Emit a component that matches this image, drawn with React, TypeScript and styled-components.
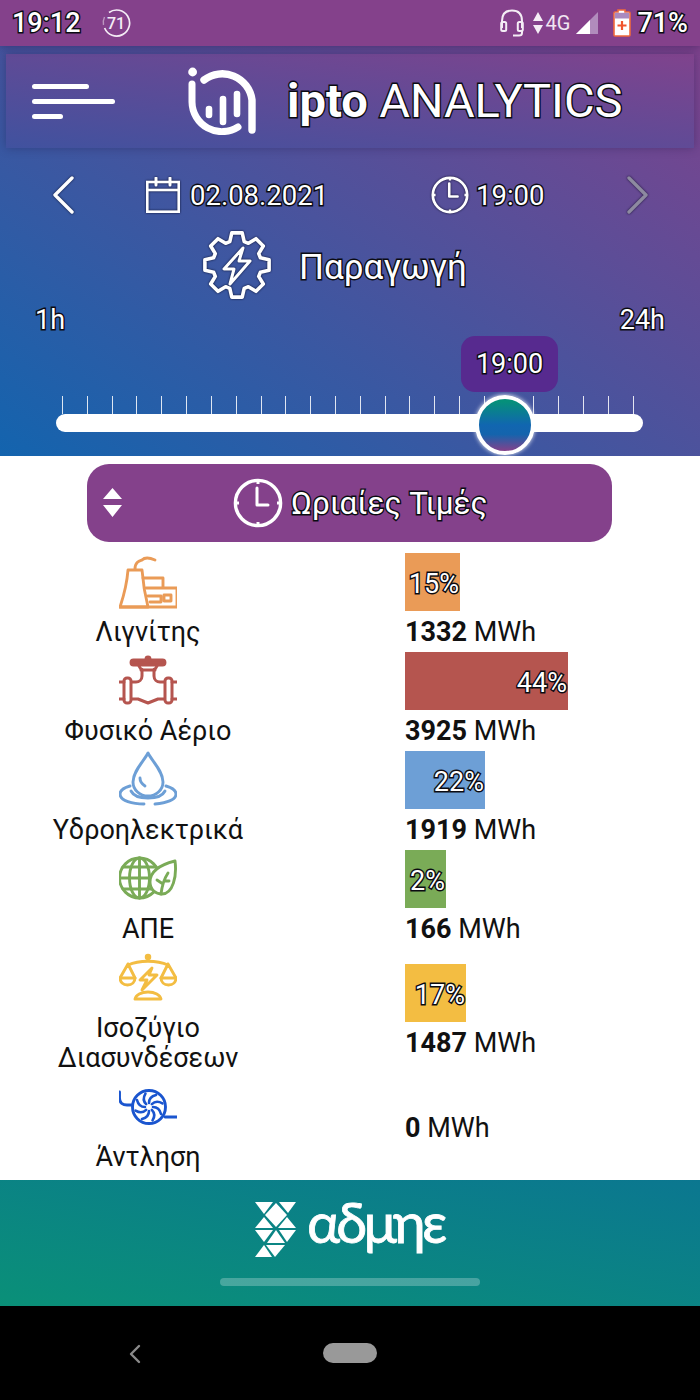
import React from "react";
import styled, { createGlobalStyle, css } from "styled-components";

const Global = createGlobalStyle`
  html, body { margin: 0; padding: 0; background: #fff; }
  body { font-family: Roboto, "Noto Sans", sans-serif; }
  * { box-sizing: border-box; }
`;

const outlined = css`
  color: #fff;
  -webkit-text-stroke: 2.8px #0b0b12;
  paint-order: stroke fill;
`;

const Page = styled.div`
  width: 700px;
  height: 1400px;
  overflow: hidden;
  display: flex;
  flex-direction: column;
`;

const Hero = styled.section`
  height: 456px;
  background: linear-gradient(to top right, #1364ae, #84418b);
  display: flex;
  flex-direction: column;
`;

const StatusBar = styled.div`
  height: 46px;
  flex: none;
  background: #84418b;
  display: flex;
  align-items: center;
  padding: 0 12px;
  box-shadow: 0 1px 8px rgba(20, 10, 60, 0.35);
  position: relative;
`;

const StatusTime = styled.span`
  ${outlined}
  font-size: 27px;
  font-weight: 500;
  line-height: 46px;
`;

const StatusBadge = styled.svg`
  width: 30px;
  height: 30px;
  margin-left: 20px;
`;

const StatusRight = styled.div`
  margin-left: auto;
  display: flex;
  align-items: center;
`;

const StatusIcon = styled.svg<{ $gap?: number }>`
  display: block;
  flex: none;
  margin-left: ${(p) => p.$gap ?? 0}px;
`;

const NetLabel = styled.span`
  color: #f0e6f2;
  font-size: 20px;
  margin-left: 3px;
  line-height: 46px;
`;

const StatusPercent = styled.span`
  ${outlined}
  font-size: 27px;
  font-weight: 500;
  margin-left: 6px;
`;

const AppBar = styled.header`
  margin: 8px 6px 0;
  height: 94px;
  flex: none;
  display: flex;
  align-items: center;
  padding-left: 26px;
  background: linear-gradient(to top right, #40529f, #80438d);
  box-shadow: 0 0 9px rgba(30, 20, 70, 0.35);
`;

const Burger = styled.div`
  width: 83px;
  display: flex;
  flex-direction: column;
  gap: 10px;
`;

const BurgerLine = styled.span<{ $w: number }>`
  display: block;
  height: 5px;
  border-radius: 3px;
  background: #fff;
  width: ${(p) => p.$w}px;
`;

const BrandMark = styled.svg`
  width: 68px;
  height: 68px;
  margin-left: 73px;
  flex: none;
`;

const Brand = styled.h1`
  ${outlined}
  margin: 0 0 0 31px;
  font-size: 47px;
  font-weight: 400;
  white-space: nowrap;
  line-height: 60px;
  b { font-weight: 700; }
`;

const DateRow = styled.div`
  margin-top: 27px;
  height: 40px;
  flex: none;
  padding-left: 52px;
  display: grid;
  grid-template-columns: 94px 285px 194px 24px;
  align-items: center;
`;

const DateGroup = styled.div<{ $gap: number }>`
  display: flex;
  align-items: center;
  gap: ${(p) => p.$gap}px;
`;

const RowText = styled.span`
  ${outlined}
  font-size: 27.5px;
`;

const Glow = styled.svg`
  display: block;
  flex: none;
  filter: drop-shadow(0 0 1px rgba(0, 0, 20, 0.8));
`;

const TitleRow = styled.div`
  margin-top: 16px;
  height: 68px;
  flex: none;
  padding-left: 203px;
  display: flex;
  align-items: center;
  gap: 28px;
`;

const Title = styled.h2`
  ${outlined}
  margin: 4px 0 0;
  font-size: 35px;
  font-weight: 400;
`;

const RangeLabels = styled.div`
  margin-top: 7px;
  height: 28px;
  flex: none;
  padding: 0 35px;
  display: flex;
  justify-content: space-between;
  align-items: center;
`;

const RangeLabel = styled.span`
  ${outlined}
  font-size: 27px;
`;

const Slider = styled.div`
  position: relative;
  margin: 62px 57px 24px 56px;
`;

const Ticks = styled.div`
  height: 18px;
  padding: 0 9px 0 6px;
  display: flex;
  justify-content: space-between;
`;

const Tick = styled.i`
  display: block;
  width: 1px;
  height: 18px;
  background: rgba(255, 255, 255, 0.85);
`;

const Track = styled.div`
  height: 18px;
  border-radius: 9px;
  background: #fff;
`;

const Thumb = styled.div`
  position: absolute;
  left: 419px;
  top: -1px;
  width: 60px;
  height: 60px;
  border-radius: 50%;
  border: 4px solid #fff;
  background: linear-gradient(to bottom, #05907a 5%, #1166b0 50%, #1464ad 68%, #84418b 100%);
  box-shadow: 0 0 4px rgba(255, 255, 255, 0.9);
`;

const Bubble = styled.div`
  ${outlined}
  position: absolute;
  left: 405px;
  top: -60px;
  width: 97px;
  height: 56px;
  border-radius: 14px;
  background: #572a8f;
  font-size: 27px;
  display: flex;
  align-items: center;
  justify-content: center;
`;

const Main = styled.main`
  flex: 1;
  background: #fff;
  display: flex;
  flex-direction: column;
`;

const Toggle = styled.button`
  margin: 8px 0 11px 87px;
  width: 525px;
  height: 78px;
  flex: none;
  border: 0;
  border-radius: 22px;
  background: #84418b;
  padding: 0 0 0 15px;
  display: flex;
  align-items: center;
  font-family: inherit;
`;

const ToggleArrows = styled.svg`
  width: 21px;
  height: 30px;
  flex: none;
`;

const ToggleClock = styled.svg`
  width: 50px;
  height: 50px;
  margin-left: 110px;
  flex: none;
`;

const ToggleLabel = styled.span`
  ${outlined}
  margin-left: 8px;
  font-size: 31.4px;
`;

const Row = styled.div`
  display: grid;
  grid-template-columns: 296px 1fr;
  align-items: center;
`;

const Source = styled.div`
  display: flex;
  flex-direction: column;
  align-items: center;
`;

const SourceIcon = styled.svg`
  width: 58px;
  height: 58px;
  display: block;
  fill: none;
  stroke: ${(p) => p.color};
  stroke-width: 2.9;
  stroke-linecap: round;
  stroke-linejoin: round;
`;

const SourceLabel = styled.div`
  padding: 6px 0 5px;
  font-size: 27px;
  line-height: 30px;
  color: #111;
  text-align: center;
`;

const Reading = styled.div`
  padding-left: 109px;
`;

const Bar = styled.div<{ $color: string; $w: number }>`
  height: 58px;
  width: ${(p) => p.$w}px;
  background: ${(p) => p.$color};
  display: flex;
  align-items: center;
  justify-content: flex-end;
  padding: 3px 1px 0 0;
`;

const BarPct = styled.span`
  ${outlined}
  font-size: 27px;
`;

const Value = styled.div`
  padding: 6px 0 5px;
  font-size: 27px;
  line-height: 30px;
  color: #111;
  b { font-weight: 700; }
`;

const Footer = styled.footer`
  height: 126px;
  flex: none;
  background: linear-gradient(to top right, #0a9078, #0b7790);
  display: flex;
  flex-direction: column;
  align-items: center;
`;

const FooterBrand = styled.div`
  margin-top: 21px;
  height: 56px;
  display: flex;
  align-items: center;
  gap: 11px;
`;

const FooterMark = styled.svg`
  width: 41px;
  height: 56px;
  fill: #fff;
`;

const FooterWord = styled.span`
  color: #fff;
  -webkit-text-stroke: 0.8px #fff;
  font-family: Lato, "Noto Sans", sans-serif;
  font-size: 56px;
  line-height: 56px;
  font-weight: 400;
  letter-spacing: -3.8px;
  width: 138px;
  padding-bottom: 14px;
`;

const FooterPill = styled.div`
  margin-top: 21px;
  width: 260px;
  height: 8px;
  border-radius: 4px;
  background: rgba(255, 255, 255, 0.25);
`;

const NavBar = styled.nav`
  height: 94px;
  flex: none;
  background: #000;
  position: relative;
  display: flex;
  align-items: center;
  justify-content: center;
`;

const NavBack = styled.svg`
  position: absolute;
  left: 128px;
  top: 37px;
  width: 14px;
  height: 22px;
`;

const NavHome = styled.div`
  width: 54px;
  height: 20px;
  margin-top: -1px;
  border-radius: 10px;
  background: #999;
`;

const Chevron = ({ dir, color }: { dir: "l" | "r"; color: string }) => (
  <Glow width="24" height="38" viewBox="0 0 24 38" fill="none" stroke={color} strokeWidth="3.4" strokeLinecap="round" strokeLinejoin="round">
    <path d={dir === "l" ? "M20 2 L3 19 L20 36" : "M4 2 L21 19 L4 36"} />
  </Glow>
);

const ClockFace = ({ size }: { size: number }) => (
  <>
    <circle cx="25" cy="25" r="22.6" fill="none" stroke="#fff" strokeWidth={size > 40 ? 3.4 : 3.6} />
    <path d="M24 10 V27 H35" fill="none" stroke="#fff" strokeWidth={size > 40 ? 3 : 3.4} strokeLinecap="round" strokeLinejoin="round" />
    <path d="M25 2 V6 M25 44 V48 M2 25 H6 M44 25 H48" stroke="#fff" strokeWidth="3" />
  </>
);

const gearPath = (() => {
  const pts: string[] = [];
  const n = 8;
  for (let i = 0; i < n; i++) {
    const a = (i * 2 * Math.PI) / n - Math.PI / 2;
    const at = (r: number, off: number) => {
      const x = 34 + r * Math.cos(a + off);
      const y = 34 + r * Math.sin(a + off);
      return `${x.toFixed(1)} ${y.toFixed(1)}`;
    };
    pts.push(at(24.5, -0.3), at(32.5, -0.16), at(32.5, 0.16), at(24.5, 0.3));
  }
  return "M" + pts.join(" L") + " Z";
})();

type Item = { label: React.ReactNode; mwh: number; pct?: number; w?: number; color: string; icon: React.ReactNode };

const lignite = (
  <>
    <path d="M1 54 C5 42 8 30 9 17 H23 C24 30 26 42 29 54 Z" />
    <path d="M1 54 H58 V35 H44 V25 H24 M27 35 H44" />
    <path d="M29 43 H42 V49 H31 M45 42 H52 V48 H45 Z" />
    <path d="M16 16 C16 9 20 8 23 7 C25 5 29 4 36 7" />
  </>
);

const valve = (
  <>
    <rect x="12" y="8" width="34" height="5" rx="2.5" fill="#b5554f" />
    <circle cx="29" cy="7" r="2" fill="#b5554f" />
    <path d="M20 14 C21 17 24 18 24 18 M38 14 C37 17 34 18 34 18 M22 18 H36" strokeWidth="3" />
    <path d="M23 18 V24 C23 28 20 30 17 30 H13 M35 18 V24 C35 28 38 30 41 30 H45" strokeWidth="3" />
    <path d="M13 47 H19 L29 51 L39 47 H45" strokeWidth="3" />
    <rect x="5" y="26" width="7" height="25" rx="3" strokeWidth="3" />
    <rect x="46" y="26" width="7" height="25" rx="3" strokeWidth="3" />
    <path d="M0 30 H5 M0 47 H5 M53 30 H58 M53 47 H58" strokeWidth="3" />
  </>
);

const drop = (
  <>
    <path d="M29 2 C25 10 14 20 14 31 C14 39 21 45 29 45 C37 45 44 39 44 31 C44 20 33 10 29 2 Z" />
    <path d="M21 27 C21 30 23 33 26 35" />
    <path d="M11 35 C4 37 1 40 1 43 C1 50 14 53 25 53 M36 53 C45 52 57 50 57 43 C57 40 54 37 47 35" />
    <path d="M12 40 C15 46 23 47 29 47 C35 47 43 46 46 40" />
  </>
);

const globe = (
  <>
    <circle cx="20.5" cy="28" r="20" />
    <ellipse cx="20.5" cy="28" rx="10" ry="20" />
    <path d="M20.5 8 V48 M1 28 H40 M4 17 H37 M4 39 H37" />
    <path d="M56 11 C44 14 31 20 31 32 C31 40 37 44 43 44 C54 44 58 26 56 11 Z" fill="#fff" />
    <path d="M42 44 C43 36 45 29 49 23 M44 34 L38 30 M45 31 L50 31" />
  </>
);

const scales = (
  <>
    <circle cx="29" cy="8" r="1.8" fill="#f3bd42" />
    <path d="M9 16 C20 11 38 11 49 16" strokeWidth="3" />
    <path d="M9 15 L1 29 M9 15 L16 29 M49 15 L42 29 M49 15 L57 29" />
    <path d="M1 29 H16 C16 33 13 36 8.5 36 C4 36 1 33 1 29 Z M42 29 H57 C57 33 54 36 49.5 36 C45 36 42 33 42 29 Z" />
    <path d="M33 19 L21 31 H28 L23 41 L38 26 H30 Z" />
    <path d="M16 50 H42 C41 46 36 43 29 43 C22 43 17 46 16 50 Z" />
  </>
);

const pumpBlades = Array.from({ length: 8 }, (_, i) => (
  <path key={i} d="M30 25 C30 21 33 18 37 17" transform={`rotate(${i * 45} 30 29)`} strokeWidth="2.6" />
));

const pump = (
  <>
    <circle cx="30" cy="29" r="16.5" />
    {pumpBlades}
    <path d="M0.5 14 V20 C0.5 25 4 27 8 27 H13.5 M46 39 H58" />
  </>
);

const items: Item[] = [
  { label: "Λιγνίτης", mwh: 1332, pct: 15, w: 55, color: "#ea9b57", icon: lignite },
  { label: "Φυσικό Αέριο", mwh: 3925, pct: 44, w: 163, color: "#b5554f", icon: valve },
  { label: "Υδροηλεκτρικά", mwh: 1919, pct: 22, w: 80, color: "#6d9fd6", icon: drop },
  { label: "ΑΠΕ", mwh: 166, pct: 2, w: 41, color: "#7aab57", icon: globe },
  { label: <>Ισοζύγιο<br />Διασυνδέσεων</>, mwh: 1487, pct: 17, w: 61, color: "#f3bd42", icon: scales },
  { label: "Άντληση", mwh: 0, color: "#1a55cf", icon: pump },
];

export default function App() {
  return (
    <Page>
      <Global />
      <Hero>
        <StatusBar>
          <StatusTime>19:12</StatusTime>
          <StatusBadge viewBox="0 0 30 30">
            <path d="M8 4.5 A13 13 0 1 1 3.6 20" fill="none" stroke="#f4ecf5" strokeWidth="1.7" />
            <path d="M2.5 17 A13 13 0 0 1 3.5 9" fill="none" stroke="#f4ecf5" strokeWidth="1.4" opacity=".5" />
            <text x="15" y="20.5" textAnchor="middle" fontSize="16" fontWeight="500" fontFamily="Roboto" fill="#f4ecf5">71</text>
          </StatusBadge>
          <StatusRight>
            <StatusIcon width="24" height="28" viewBox="0 0 24 28" fill="none" stroke="#f4edf5" strokeWidth="2">
              <path d="M2 19 V12 C2 5 6 1.5 12 1.5 C18 1.5 22 5 22 12 V19" />
              <rect x="1.2" y="13" width="5" height="9" rx="1.5" />
              <rect x="17.8" y="13" width="5" height="9" rx="1.5" />
              <path d="M22 22 V24 C22 26 21 26.5 19 26.5 H13" />
            </StatusIcon>
            <StatusIcon $gap={9} width="10" height="22" viewBox="0 0 10 22" fill="#f4edf5">
              <path d="M5 0 L10 9 H0 Z M0 13 H10 L5 22 Z" />
            </StatusIcon>
            <NetLabel>4G</NetLabel>
            <StatusIcon $gap={6} width="22" height="22" viewBox="0 0 22 22">
              <path d="M22 0 V22 H0 Z" fill="#b18cbc" />
              <path d="M14 8 V22 H0 Z" fill="#fff" />
            </StatusIcon>
            <StatusIcon $gap={15} width="18" height="28" viewBox="0 0 18 28">
              <path d="M5 1 H12 V3 H16 A1 1 0 0 1 17 4 V26 A1 1 0 0 1 16 27 H2 A1 1 0 0 1 1 26 V4 A1 1 0 0 1 2 3 H5 Z" fill="#fff" stroke="#f06a3c" strokeWidth="1.6" />
              <path d="M1.8 3.8 H16.2 V9.5 H1.8 Z" fill="#a98abf" />
              <path d="M9 12 V21 M4.5 16.5 H13.5" stroke="#f0552e" strokeWidth="2.2" />
            </StatusIcon>
            <StatusPercent>71%</StatusPercent>
          </StatusRight>
        </StatusBar>

        <AppBar>
          <Burger>
            <BurgerLine $w={57} />
            <BurgerLine $w={83} />
            <BurgerLine $w={31} />
          </Burger>
          <BrandMark viewBox="0 0 68 68" fill="none" stroke="#fff" strokeLinecap="round">
            <circle cx="4.6" cy="5" r="4.4" fill="#fff" stroke="none" />
            <path d="M4 17 V35 A30 30 0 0 0 50 60" strokeWidth="7" />
            <path d="M16 13 A30 30 0 0 1 64 33 V63" strokeWidth="7.4" />
            <path d="M21 42 V48 M35 32 V55 M49 27 V47" strokeWidth="6.6" />
          </BrandMark>
          <Brand><b>ipto</b> ANALYTICS</Brand>
        </AppBar>

        <DateRow>
          <Chevron dir="l" color="#fff" />
          <DateGroup $gap={10}>
            <Glow width="34" height="36" viewBox="0 0 34 36" fill="none" stroke="#fff" strokeWidth="2.6">
              <rect x="1.3" y="5" width="31.4" height="29.7" />
              <path d="M1 13 H33" />
              <path d="M10 1 V8 M24 1 V8" strokeWidth="3" strokeLinecap="round" />
            </Glow>
            <RowText>02.08.2021</RowText>
          </DateGroup>
          <DateGroup $gap={7}>
            <Glow width="38" height="38" viewBox="0 0 50 50">
              <ClockFace size={38} />
            </Glow>
            <RowText>19:00</RowText>
          </DateGroup>
          <Chevron dir="r" color="#8d8aa0" />
        </DateRow>

        <TitleRow>
          <Glow width="68" height="68" viewBox="0 0 68 68" fill="none" stroke="#fff" strokeWidth="3.6" strokeLinejoin="round">
            <path d={gearPath} />
            <path d="M40 17 L21 38 H31 L27 53 L47 30 H36 Z" strokeWidth="3" />
          </Glow>
          <Title>Παραγωγή</Title>
        </TitleRow>

        <RangeLabels>
          <RangeLabel>1h</RangeLabel>
          <RangeLabel>24h</RangeLabel>
        </RangeLabels>

        <Slider>
          <Bubble>19:00</Bubble>
          <Ticks>
            {Array.from({ length: 24 }, (_, i) => <Tick key={i} />)}
          </Ticks>
          <Track />
          <Thumb />
        </Slider>
      </Hero>

      <Main>
        <Toggle type="button">
          <ToggleArrows viewBox="0 0 21 30" fill="#fff">
            <path d="M10.5 0 L20 11 H1 Z M1 17 H20 L10.5 29 Z" />
          </ToggleArrows>
          <ToggleClock viewBox="0 0 50 50">
            <ClockFace size={50} />
          </ToggleClock>
          <ToggleLabel>Ωριαίες Τιμές</ToggleLabel>
        </Toggle>

        {items.map((it, i) => (
          <Row key={i}>
            <Source>
              <SourceIcon viewBox="0 0 58 58" color={it.color}>{it.icon}</SourceIcon>
              <SourceLabel>{it.label}</SourceLabel>
            </Source>
            <Reading>
              {it.pct !== undefined && (
                <Bar $color={it.color} $w={it.w ?? 0}>
                  <BarPct>{it.pct}%</BarPct>
                </Bar>
              )}
              <Value><b>{it.mwh}</b> MWh</Value>
            </Reading>
          </Row>
        ))}
      </Main>

      <Footer>
        <FooterBrand>
          <FooterMark viewBox="0 0 41 56">
            <polygon points="0,1 18,1 9,13" />
            <polygon points="21,2 32,14 21,26 10,14" />
            <polygon points="24,1 41,1 33,12" />
            <polygon points="9,16 0,27 18,27" />
            <polygon points="32,16 41,27 23,27" />
            <polygon points="0,29 18,29 9,41" />
            <polygon points="21,29 30,42 12,42" />
            <polygon points="24,29 41,29 32,41" />
            <polygon points="11,44 30,44 20,56" />
            <polygon points="9,44 0,56 17,56" />
          </FooterMark>
          <FooterWord>αδμηε</FooterWord>
        </FooterBrand>
        <FooterPill />
      </Footer>

      <NavBar>
        <NavBack viewBox="0 0 14 22" fill="none" stroke="#8a8a8a" strokeWidth="2.4" strokeLinecap="round" strokeLinejoin="round">
          <path d="M11 3 L3 11 L11 19" />
        </NavBack>
        <NavHome />
      </NavBar>
    </Page>
  );
}
